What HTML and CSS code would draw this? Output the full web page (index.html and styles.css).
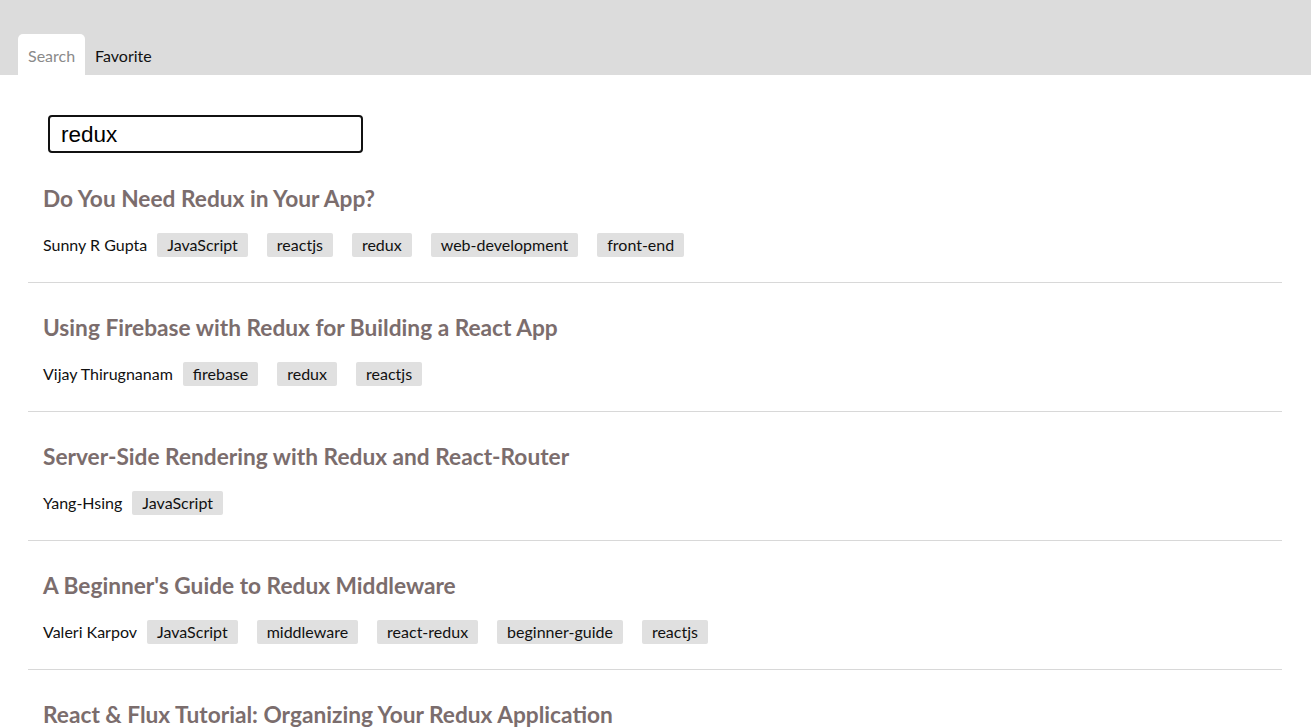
FILE: index.html
```html
<!DOCTYPE html>
<html>
<head>
<meta charset="utf-8">
<link rel="stylesheet" href="styles.css">
</head>
<body>
<header class="tabs">
  <div class="tab active">Search</div>
  <div class="tab">Favorite</div>
</header>
<main class="page">
  <div class="search-wrap">
    <input class="search" type="text" value="redux">
  </div>
  <ul class="list">
    <li class="item">
      <h3 class="title">Do You Need Redux in Your App?</h3>
      <div class="meta"><span class="author">Sunny R Gupta</span><span class="tag">JavaScript</span><span class="tag">reactjs</span><span class="tag">redux</span><span class="tag">web-development</span><span class="tag">front-end</span></div>
    </li>
    <li class="item">
      <h3 class="title">Using Firebase with Redux for Building a React App</h3>
      <div class="meta"><span class="author">Vijay Thirugnanam</span><span class="tag">firebase</span><span class="tag">redux</span><span class="tag">reactjs</span></div>
    </li>
    <li class="item">
      <h3 class="title">Server-Side Rendering with Redux and React-Router</h3>
      <div class="meta"><span class="author">Yang-Hsing</span><span class="tag">JavaScript</span></div>
    </li>
    <li class="item">
      <h3 class="title">A Beginner's Guide to Redux Middleware</h3>
      <div class="meta"><span class="author">Valeri Karpov</span><span class="tag">JavaScript</span><span class="tag">middleware</span><span class="tag">react-redux</span><span class="tag">beginner-guide</span><span class="tag">reactjs</span></div>
    </li>
    <li class="item">
      <h3 class="title">React &amp; Flux Tutorial: Organizing Your Redux Application</h3>
    </li>
  </ul>
</main>
</body>
</html>
```

FILE: styles.css
```css
* { box-sizing: border-box; }
html, body { margin: 0; padding: 0; background: #fff; }
body {
  font-family: Lato, "Open Sans", sans-serif;
  color: #111;
  overflow: hidden;
  height: 728px;
}
.tabs {
  background: #dcdcdc;
  height: 75px;
  display: flex;
  align-items: flex-end;
  padding-left: 18px;
}
.tab {
  height: 41px;
  padding: 1px 10px 0;
  font-size: 16px;
  line-height: 41px;
  color: #111;
}
.tab.active {
  background: #fff;
  color: #8a8a8a;
  border-radius: 5px 5px 0 0;
}
.page {
  padding: 40px 29px 0 28px;
}
.search-wrap {
  padding-left: 20px;
}
.search {
  display: block;
  width: 315px;
  height: 38px;
  border: 2px solid #111;
  border-radius: 4px;
  padding: 1px 11px 0;
  font-family: Arial, "Liberation Sans", sans-serif;
  font-size: 22.5px;
  color: #000;
  outline: none;
}
.list {
  list-style: none;
  margin: 1px 0 0;
  padding: 0;
}
.item {
  padding: 31px 15px 25px;
  border-bottom: 1px solid #d8d8d8;
}
.title {
  margin: 0;
  font-size: 22.7px;
  line-height: 28px;
  font-weight: 700;
  color: #7b6d6d;
}
.meta {
  margin-top: 20px;
  display: flex;
  align-items: center;
  gap: 19px;
  font-size: 16px;
  line-height: 24px;
}
.author { margin-right: -9px; }
.tag {
  background: #e0e0e0;
  border-radius: 2px;
  padding: 0 10px;
}
```
